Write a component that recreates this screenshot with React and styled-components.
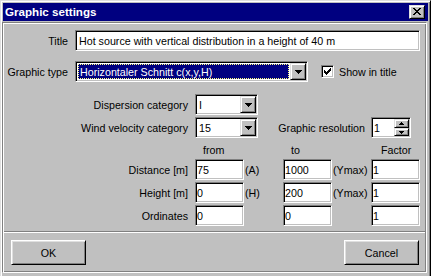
import React from "react";
import styled, { createGlobalStyle } from "styled-components";

const Global = createGlobalStyle`
  html, body { margin: 0; padding: 0; background: #c0c0c0; overflow: hidden; }
  body { font-family: "Liberation Sans", Arial, sans-serif; font-size: 10.7px; color: #000; }
  * { box-sizing: border-box; }
`;

const Window = styled.div`
  width: 431px;
  height: 276px;
  background: #c0c0c0;
  border: 1px solid;
  border-bottom-width: 0;
  border-color: #dfdfdf #000 #000 #dfdfdf;
  box-shadow: inset 1px 1px #fff, inset -1px 0 #808080;
  padding: 2px 2px 0 2px;
  overflow: hidden;
`;

const TitleBar = styled.div`
  height: 18px;
  background: #000080;
  color: #fff;
  font-weight: bold;
  font-size: 11.6px;
  line-height: 18px;
  display: flex;
  align-items: center;
  justify-content: space-between;
  padding: 0 3px 0 2px;
`;

const raised = `
  background: #c0c0c0;
  border: 1px solid;
  border-color: #fff #000 #000 #fff;
  box-shadow: inset 1px 1px #dfdfdf, inset -1px -1px #808080;
`;

const raisedSmall = `
  background: #c0c0c0;
  border: 1px solid;
  border-color: #dfdfdf #000 #000 #dfdfdf;
  box-shadow: inset 1px 1px #fff, inset -1px -1px #808080;
`;

const sunken = `
  background: #fff;
  border: 1px solid;
  border-color: #808080 #fff #fff #808080;
  box-shadow: inset 1px 1px #000, inset -1px -1px #c0c0c0;
`;

const CloseButton = styled.div`
  ${raisedSmall}
  width: 16px;
  height: 14px;
  display: flex;
  align-items: center;
  justify-content: center;
  padding-bottom: 1px;
`;

const Panel = styled.div`
  margin: 1px 0 0 -1px;
  width: 425px;
  height: 251px;
  border: 1px solid;
  border-color: #808080 #fff #fff #808080;
  box-shadow: inset 1px 1px #fff, inset -1px -1px #808080;
  display: flex;
  flex-direction: column;
`;

const Row = styled.div`
  display: flex;
  align-items: center;
  height: ${(p) => p.$h || 21}px;
  margin-top: ${(p) => p.$mt}px;
`;

const Label = styled.span`
  flex: none;
  width: ${(p) => p.$w}px;
  margin-left: ${(p) => p.$ml || 0}px;
  margin-right: ${(p) => (p.$gap === undefined ? 7 : p.$gap)}px;
  text-align: right;
  white-space: nowrap;
`;

const Field = styled.div`
  ${sunken}
  flex: none;
  width: ${(p) => p.$w}px;
  height: 21px;
  display: flex;
  align-items: center;
  padding-left: ${(p) => p.$pl || 1}px;
  white-space: nowrap;
  overflow: hidden;
`;

const Combo = styled.div`
  ${sunken}
  flex: none;
  width: ${(p) => p.$w}px;
  height: 21px;
  padding: 1px;
  display: flex;
`;

const ComboText = styled.div`
  flex: 1;
  display: flex;
  align-items: center;
  padding-left: 2px;
  white-space: nowrap;
  overflow: hidden;
`;

const Highlight = styled.div`
  flex: 1;
  margin: 1px;
  background: #000080;
  color: #fff;
  border: 1px dotted #ffff80;
  display: flex;
  align-items: center;
  padding-left: 1px;
  white-space: nowrap;
  overflow: hidden;
`;

const DropButton = styled.div`
  ${raisedSmall}
  flex: none;
  width: 16px;
  height: 17px;
  display: flex;
  align-items: center;
  justify-content: center;
`;

const CheckBox = styled.div`
  ${sunken}
  flex: none;
  width: 13px;
  height: 13px;
  margin-left: 13px;
  margin-right: 5px;
  display: flex;
  align-items: center;
  justify-content: center;
`;

const Spin = styled.div`
  ${sunken}
  flex: none;
  width: 40px;
  height: 21px;
  padding: 1px;
  display: flex;
`;

const SpinText = styled.div`
  flex: 1;
  display: flex;
  align-items: center;
  padding-left: 1px;
`;

const SpinButtons = styled.div`
  flex: none;
  width: 15px;
  display: flex;
  flex-direction: column;
`;

const SpinButton = styled.div`
  ${raisedSmall}
  height: ${(p) => p.$h}px;
  display: flex;
  align-items: center;
  justify-content: center;
`;

const Unit = styled.span`
  flex: none;
  width: 39px;
  padding-left: 1px;
  white-space: nowrap;
`;

const HeadCell = styled.span`
  flex: none;
  width: ${(p) => p.$w}px;
  padding-left: ${(p) => p.$pl}px;
  white-space: nowrap;
`;

const Separator = styled.div`
  margin: 5px 1px 0 1px;
  height: 2px;
  border-top: 1px solid #808080;
  border-bottom: 1px solid #fff;
`;

const ButtonRow = styled.div`
  display: flex;
  justify-content: space-between;
  margin-top: 7px;
  padding: 0 7px 0 8px;
`;

const Button = styled.div`
  ${raised}
  width: 75px;
  height: 25px;
  display: flex;
  align-items: center;
  justify-content: center;
`;

const Pix = ({ w, h, d }) => (
  <svg width={w} height={h} viewBox={`0 0 ${w} ${h}`} shapeRendering="crispEdges">
    <path d={d} fill="#000" />
  </svg>
);

const CLOSE_D =
  "M0 0h2v1H0z M6 0h2v1H6z M1 1h2v1H1z M5 1h2v1H5z M2 2h4v1H2z M3 3h2v1H3z M2 4h4v1H2z M1 5h2v1H1z M5 5h2v1H5z M0 6h2v1H0z M6 6h2v1H6z";
const DOWN_D = "M0 0h7v1H0z M1 1h5v1H1z M2 2h3v1H2z M3 3h1v1H3z";
const SPIN_UP_D = "M2 0h1v1H2z M1 1h3v1H1z M0 2h5v1H0z";
const SPIN_DOWN_D = "M0 0h5v1H0z M1 1h3v1H1z M2 2h1v1H2z";
const CHECK_D =
  "M6 0h1v1H6z M5 1h2v1H5z M0 2h1v1H0z M4 2h3v1H4z M0 3h2v1H0z M3 3h3v1H3z M0 4h5v1H0z M1 5h3v1H1z M2 6h1v1H2z";

const DropDown = ({ w, children, selected }) => (
  <Combo $w={w}>
    {selected ? <Highlight>{children}</Highlight> : <ComboText>{children}</ComboText>}
    <DropButton>
      <Pix w={7} h={4} d={DOWN_D} />
    </DropButton>
  </Combo>
);

const DataRow = ({ mt, label, a, ua, b, ub, c }) => (
  <Row $mt={mt}>
    <Label $w={185}>{label}</Label>
    <Field $w={49}>{a}</Field>
    <Unit>{ua}</Unit>
    <Field $w={49}>{b}</Field>
    <Unit>{ub}</Unit>
    <Field $w={49}>{c}</Field>
  </Row>
);

export default function App() {
  return (
    <>
      <Global />
      <Window>
        <TitleBar>
          <span>Graphic settings</span>
          <CloseButton>
            <Pix w={8} h={7} d={CLOSE_D} />
          </CloseButton>
        </TitleBar>
        <Panel>
          <Row $mt={7}>
            <Label $w={65}>Title</Label>
            <Field $w={345} $pl={3}>
              Hot source with vertical distribution in a height of 40 m
            </Field>
          </Row>
          <Row $mt={10}>
            <Label $w={65}>Graphic type</Label>
            <DropDown w={233} selected>
              Horizontaler Schnitt c(x,y,H)
            </DropDown>
            <CheckBox>
              <Pix w={7} h={7} d={CHECK_D} />
            </CheckBox>
            <span>Show in title</span>
          </Row>
          <Row $mt={12}>
            <Label $w={185}>Dispersion category</Label>
            <DropDown w={63}>I</DropDown>
          </Row>
          <Row $mt={2}>
            <Label $w={185}>Wind velocity category</Label>
            <DropDown w={63}>15</DropDown>
            <Label $w={87} $ml={20} $gap={6}>
              Graphic resolution
            </Label>
            <Spin>
              <SpinText>1</SpinText>
              <SpinButtons>
                <SpinButton $h={9}>
                  <Pix w={5} h={3} d={SPIN_UP_D} />
                </SpinButton>
                <SpinButton $h={8}>
                  <Pix w={5} h={3} d={SPIN_DOWN_D} />
                </SpinButton>
              </SpinButtons>
            </Spin>
          </Row>
          <Row $mt={5} $h={13}>
            <HeadCell $w={280} $pl={200}>from</HeadCell>
            <HeadCell $w={88} $pl={8}>to</HeadCell>
            <HeadCell $w={88} $pl={10}>Factor</HeadCell>
          </Row>
          <DataRow mt={3} label="Distance [m]" a="75" ua="(A)" b="1000" ub="(Ymax)" c="1" />
          <DataRow mt={2} label="Height [m]" a="0" ua="(H)" b="200" ub="(Ymax)" c="1" />
          <DataRow mt={2} label="Ordinates" a="0" ua="" b="0" ub="" c="1" />
          <Separator />
          <ButtonRow>
            <Button>OK</Button>
            <Button>Cancel</Button>
          </ButtonRow>
        </Panel>
      </Window>
    </>
  );
}
